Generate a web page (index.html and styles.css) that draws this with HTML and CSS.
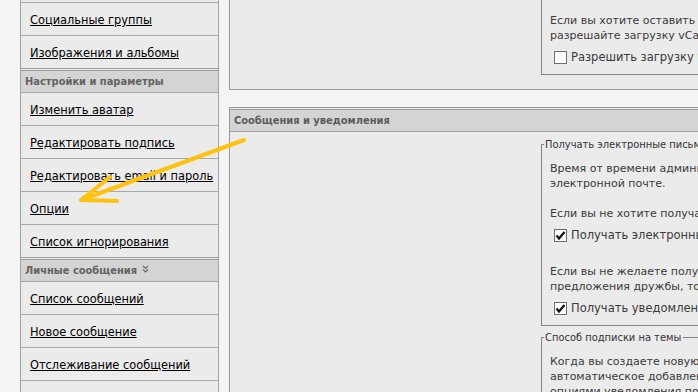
FILE: index.html
```html
<!DOCTYPE html>
<html lang="ru">
<head>
<meta charset="utf-8">
<title>Настройки и параметры</title>
<link rel="stylesheet" href="styles.css">
</head>
<body>
  <div class="page">
    <!-- левое меню настроек -->
    <div class="sidebar">
      <div class="side-item"><a href="#">Социальные группы</a></div>
      <div class="side-item"><a href="#">Изображения и альбомы</a></div>
      <div class="side-head">Настройки и параметры</div>
      <div class="side-item"><a href="#">Изменить аватар</a></div>
      <div class="side-item"><a href="#">Редактировать подпись</a></div>
      <div class="side-item"><a href="#">Редактировать email и пароль</a></div>
      <div class="side-item"><a href="#">Опции</a></div>
      <div class="side-item"><a href="#">Список игнорирования</a></div>
      <div class="side-head">Личные сообщения
        <svg class="collapse" width="7" height="8" viewBox="0 0 7 8"><polyline points="1,1 3.5,3.5 6,1"/><polyline points="1,4.5 3.5,7 6,4.5"/></svg>
      </div>
      <div class="side-item"><a href="#">Список сообщений</a></div>
      <div class="side-item"><a href="#">Новое сообщение</a></div>
      <div class="side-item"><a href="#">Отслеживание сообщений</a></div>
      <div class="side-item"><a href="#">Редактировать папки</a></div>
    </div>

    <!-- основная колонка -->
    <div class="main">
      <div class="panel panel-top">
        <div class="panel-head">Контактная информация</div>
        <div class="panel-body">
          <fieldset>
            <legend>Загрузка vCard</legend>
            <p>Если вы хотите оставить свои контактные данные другим пользователям,<br>
            разрешайте загрузку vCard.</p>
            <label class="check-row"><span class="check"></span>Разрешить загрузку vCard</label>
          </fieldset>
        </div>
      </div>

      <div class="panel">
        <div class="panel-head">Сообщения и уведомления</div>
        <div class="panel-body">
          <fieldset>
            <legend>Получать электронные письма от администрации</legend>
            <p>Время от времени администрация может отправлять вам сообщения по<br>
            электронной почте.</p>
            <p>Если вы не хотите получать такие письма, снимите флажок ниже.</p>
            <label class="check-row"><span class="check"><svg width="11" height="11" viewBox="0 0 11 11"><polyline points="1.5,5.5 4,8.5 9.5,2"/></svg></span>Получать электронные письма от администрации</label>
            <p>Если вы не желаете получать уведомления о запросах и<br>
            предложения дружбы, то снимите флажок.</p>
            <label class="check-row"><span class="check"><svg width="11" height="11" viewBox="0 0 11 11"><polyline points="1.5,5.5 4,8.5 9.5,2"/></svg></span>Получать уведомления о предложениях дружбы</label>
          </fieldset>
          <fieldset>
            <legend>Способ подписки на темы</legend>
            <p>Когда вы создаете новую тему или отвечаете в теме, можно выбрать<br>
            автоматическое добавление её в подписки с выбранными<br>
            опциями уведомления по электронной почте.</p>
          </fieldset>
        </div>
      </div>
    </div>
  </div>

  <!-- жёлтая стрелка поверх страницы -->
  <svg class="arrow" width="698" height="392" viewBox="0 0 698 392">
    <polyline points="244,140 81,200"/>
    <polyline points="110,177 81,200 117,201"/>
  </svg>
</body>
</html>
```

FILE: styles.css
```css
body {
  margin: 0;
  background: #f4f4f4;
  font-family: "DejaVu Sans", Verdana, sans-serif;
  overflow: hidden;
}
.page {
  display: flex;
  gap: 10px;
  height: 392px;
}

/* левое меню */
.sidebar {
  flex-shrink: 0;
  width: 199px;
  margin-left: 20px;
  padding-top: 2px;
  box-sizing: border-box;
  background: #ebebeb;
  border-left: 1px solid #a3a3a3;
  border-right: 1px solid #a3a3a3;
  overflow: hidden;
}
.side-item {
  height: 31px;
  padding-top: 1px;
  line-height: 32px;
  padding-left: 9px;
  border-top: 1px solid #a8a8a8;
  font-size: 11.4px;
  white-space: nowrap;
}
.side-item a {
  color: #000;
  text-decoration: underline;
}
.side-head {
  height: 21px;
  line-height: 21px;
  padding-left: 4px;
  border-top: 3px double #9c9c9c;
  background: #d4d4d4;
  background-clip: padding-box;
  color: #636363;
  font-family: "DejaVu Sans Condensed", "Liberation Sans", sans-serif;
  font-weight: bold;
  font-size: 11px;
}
.collapse {
  margin-left: 1px;
  vertical-align: 1px;
  fill: none;
  stroke: #666;
  stroke-width: 1.1;
}

/* основная колонка */
.main {
  flex-shrink: 0;
  width: 620px;
}
.panel {
  background: #ebebeb;
  border: 1px solid #9b9b9b;
  border-top: 0;
}
.panel-top {
  margin-top: -56px;
  margin-bottom: 17px;
}
.panel-top fieldset p:first-of-type {
  margin-top: 25px;
}
.panel-head {
  height: 21px;
  line-height: 21px;
  padding-left: 4px;
  border-top: 3px double #9c9c9c;
  border-bottom: 1px solid #a3a3a3;
  background: #d4d4d4;
  background-clip: padding-box;
  color: #5c5c5c;
  font-family: "DejaVu Sans Condensed", "Liberation Sans", sans-serif;
  font-weight: bold;
  font-size: 11px;
}
.panel-body {
  padding: 6px 0 14px 311px;
}
fieldset {
  margin: 0;
  padding: 0 8px 5px 8px;
  border: 1px solid #858585;
  color: #3a3a3a;
  font-size: 11px;
}
fieldset + fieldset {
  margin-top: 5px;
}
legend {
  padding: 0 2px 0 1px;
  margin-left: -6px;
  color: #333;
  font-family: "DejaVu Sans Condensed", "Liberation Sans", sans-serif;
  font-size: 11px;
  line-height: 13px;
}
fieldset p {
  margin: 15px 0 0 0;
  line-height: 15px;
  white-space: nowrap;
}
fieldset p:first-of-type {
  margin-top: 10px;
}
.check-row + p {
  margin-top: 19px;
}
.check-row {
  display: flex;
  align-items: center;
  gap: 4px;
  height: 20px;
  margin: 4px 0 2px 4px;
  white-space: nowrap;
  font-size: 11.5px;
}
.check {
  display: flex;
  align-items: center;
  justify-content: center;
  width: 13px;
  height: 13px;
  box-sizing: border-box;
  background: #fff;
  border: 1px solid #6f6f6f;
}
.check polyline {
  fill: none;
  stroke: #111;
  stroke-width: 2.2;
}

/* стрелка */
.arrow {
  position: absolute;
  left: 0;
  top: 0;
  pointer-events: none;
}
.arrow polyline {
  fill: none;
  stroke: #ffc20e;
  stroke-width: 4;
  stroke-linecap: round;
  stroke-linejoin: round;
}
```
